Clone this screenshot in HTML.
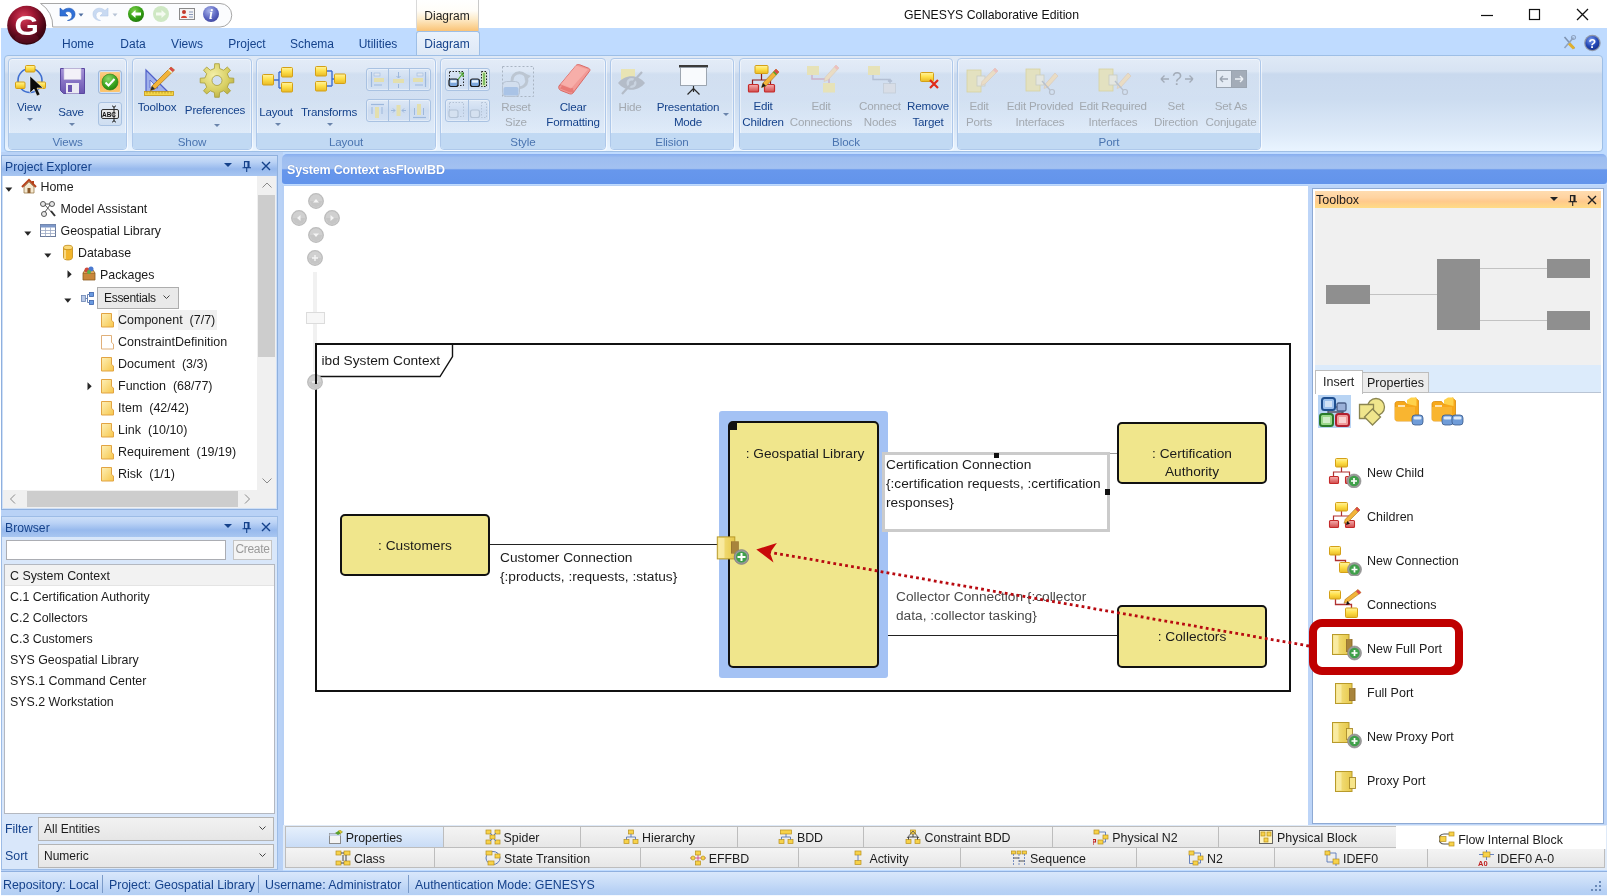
<!DOCTYPE html>
<html><head><meta charset="utf-8"><title>GENESYS Collaborative Edition</title>
<style>
*{box-sizing:border-box;margin:0;padding:0}
html,body{width:1608px;height:896px;overflow:hidden}
body{position:relative;background:#fff;font-family:"Liberation Sans",sans-serif;font-size:12px;color:#1b1b1b}
.abs{position:absolute}
.t{position:absolute;white-space:nowrap;line-height:14px;height:14px}
.c{transform:translateX(-50%);text-align:center}
/* title */
#title{left:0;top:0;width:1608px;height:28px;background:#fff}
#tabrow{left:1px;top:28px;width:1605.500px;height:866.500px;background:#bfdbff}
.rt{color:#15428b;font-size:12px}
#ribbon{left:4px;top:55px;width:1599px;height:97px;border:1px solid #9ebfe6;border-radius:4px;background:linear-gradient(#dfe9f6 0,#d7e3f3 16%,#c9d9ee 19%,#ccdcf0 45%,#dce9f8 80%,#e9f4ff 100%)}
.grp{position:absolute;top:58px;height:92px;border:1px solid #aec8ea;border-radius:4px;background:linear-gradient(rgba(255,255,255,.18),rgba(255,255,255,.05));box-shadow:inset 0 0 0 1px rgba(255,255,255,.45), 1px 1px 0 rgba(255,255,255,.6)}
.grp .gl{position:absolute;left:0;right:0;bottom:0;height:16px;background:#c1d9f3;border-radius:0 0 3px 3px;color:#4a74b0;text-align:center;font-size:11.6px;line-height:17px;letter-spacing:-.1px}
.lb{color:#15428b}
.dis{color:#a3a9b0}
.arr{position:absolute;width:0;height:0;border-left:3px solid transparent;border-right:3px solid transparent;border-top:3px solid #5a77a0}
/* panels */
.phead{position:absolute;height:19px;background:linear-gradient(#cddff8 0,#bad2f5 30%,#97b9ed 65%,#a8c6f1 100%);color:#15428b;font-size:12.2px;line-height:19px;padding-left:3px}
.tree .t{font-size:12px;color:#1b1b1b}
#root{position:absolute;left:0;top:0;width:1608px;height:896px;will-change:transform}
</style></head><body>
<div id="root">
<!--TITLE-->
<div class="abs" id="title"></div>
<div class="abs" id="tabrow"></div>
<!-- contextual tab -->
<div class="abs" style="left:416px;top:0;width:63px;height:31px;border-left:1px solid #d9d9d9;border-right:1px solid #c9c9c9;background:linear-gradient(#ffffff 0,#fffdf8 35%,#fdeccc 60%,#fbd08f 88%,#f9c377 100%)"></div>
<div class="t c" style="left:447px;top:9px;font-size:12px;color:#1e1e1e">Diagram</div>
<div class="t" style="left:904px;top:8px;font-size:12.25px;color:#111">GENESYS Collaborative Edition</div>
<!-- window controls -->
<svg class="abs" style="left:1470px;top:0" width="138" height="28" viewBox="0 0 138 28">
<path d="M11 15.5h12" stroke="#111" stroke-width="1.2" fill="none"/>
<rect x="59.5" y="9.5" width="10" height="10" stroke="#111" stroke-width="1.2" fill="none"/>
<path d="M107 9l11 11M118 9l-11 11" stroke="#111" stroke-width="1.3" fill="none"/>
</svg>
<!-- QAT -->
<svg class="abs" style="left:0;top:0" width="240" height="56" viewBox="0 0 240 56">
<defs>
<radialGradient id="gl" cx="0.42" cy="0.3" r="0.75"><stop offset="0" stop-color="#d8405c"/><stop offset="0.35" stop-color="#a01834"/><stop offset="0.75" stop-color="#4a0616"/><stop offset="1" stop-color="#2a020a"/></radialGradient>
<radialGradient id="gg" cx="0.4" cy="0.3" r="0.8"><stop offset="0" stop-color="#7ed04a"/><stop offset="0.6" stop-color="#2f9a12"/><stop offset="1" stop-color="#1d6e08"/></radialGradient>
<radialGradient id="gi" cx="0.4" cy="0.3" r="0.8"><stop offset="0" stop-color="#a9b4ea"/><stop offset="0.6" stop-color="#5a64c0"/><stop offset="1" stop-color="#3a3f96"/></radialGradient>
</defs>
<path d="M40.500 3.500H220a11.750 11.750 0 0 1 0 23.500H52.700A26 26 0 0 0 40.500 3.500Z" fill="#fbfcfe" stroke="#a7a7a7" stroke-width="1"/>
<circle cx="26.700" cy="25.300" r="19.500" fill="url(#gl)"/>
<ellipse cx="26.700" cy="38.300" rx="12" ry="5" fill="#7a1a30" opacity=".35"/>
<text x="26.700" y="35.500" text-anchor="middle" font-family="Liberation Sans, sans-serif" font-weight="bold" font-size="28" fill="#fff" transform="translate(26.700 0) scale(1.12 1) translate(-26.700 0)">G</text>
<!-- undo -->
<path d="M60 8v8h8l-3-3c3-3 7-1 7 2.500 0 3-2 4.500-4.500 5 4.500 0 7.500-2.500 7.500-6.500 0-5.500-7-8-12-3.500Z" fill="#2f6fd6" stroke="#1f55b5" stroke-width=".6"/>
<path d="M78.500 13.500h5l-2.500 3z" fill="#4f6ea0"/>
<!-- redo faded -->
<path d="M108 8v8h-8l3-3c-3-3-7-1-7 2.500 0 3 2 4.500 4.500 5-4.500 0-7.500-2.500-7.500-6.500 0-5.500 7-8 12-3.500Z" fill="#c9daf2" stroke="#b7cbe8" stroke-width=".6"/>
<path d="M112.500 13.500h5l-2.500 3z" fill="#b8c4d6"/>
<!-- back -->
<circle cx="136" cy="14" r="8" fill="url(#gg)"/>
<path d="M131 14l4.500-4v2.500h5.500v3h-5.500v2.500z" fill="#fff"/>
<circle cx="161" cy="14" r="8" fill="#cfe8c4"/>
<path d="M166 14l-4.500-4v2.500h-5.500v3h5.500v2.500z" fill="#f4faf0"/>
<!-- card -->
<rect x="179.500" y="8.500" width="15" height="11" fill="#f4f4f4" stroke="#8a8a8a"/>
<circle cx="184" cy="12" r="2" fill="#c0392b"/><path d="M181 18c0-3 6-3 6 0z" fill="#d9412f"/>
<path d="M189 12h4M189 14.500h4M189 17h4" stroke="#8899bb" stroke-width="1"/>
<!-- info -->
<circle cx="211" cy="14" r="8" fill="url(#gi)"/>
<text x="211" y="19" text-anchor="middle" font-family="Liberation Serif, serif" font-style="italic" font-weight="bold" font-size="14" fill="#fff">i</text>
</svg>
<!-- tab labels -->
<div class="abs" style="left:416px;top:31px;width:64px;height:25px;border:1px solid #9ebfe6;border-bottom:none;border-radius:3px 3px 0 0;background:linear-gradient(#eaf2fc,#dde8f6)"></div>
<div class="t c rt" style="left:78px;top:37px">Home</div>
<div class="t c rt" style="left:133px;top:37px">Data</div>
<div class="t c rt" style="left:187px;top:37px">Views</div>
<div class="t c rt" style="left:247px;top:37px">Project</div>
<div class="t c rt" style="left:312px;top:37px">Schema</div>
<div class="t c rt" style="left:378px;top:37px">Utilities</div>
<div class="t c rt" style="left:447px;top:37px">Diagram</div>
<!-- right icons -->
<svg class="abs" style="left:1558px;top:32.500px" width="48" height="20" viewBox="0 0 48 20">
<defs><radialGradient id="gh" cx="0.4" cy="0.3" r="0.8"><stop offset="0" stop-color="#7f9ff0"/><stop offset="0.55" stop-color="#2448b8"/><stop offset="1" stop-color="#142a80"/></radialGradient></defs>
<path d="M6.500 4l10 11.500" stroke="#7f93b0" stroke-width="1.600"/><path d="M15.500 4.500l-9 10.500" stroke="#8fa3c0" stroke-width="1.600"/><path d="M11 10.500l5 5" stroke="#e0b030" stroke-width="3"/><circle cx="15.500" cy="4.500" r="2" fill="none" stroke="#8fa3c0" stroke-width="1.200"/>
<circle cx="34.400" cy="10" r="8.300" fill="#8d95a8"/><circle cx="34.400" cy="10" r="7" fill="url(#gh)"/>
<text x="34.400" y="14.500" text-anchor="middle" font-family="Liberation Sans, sans-serif" font-weight="bold" font-size="12.500" fill="#fff">?</text>
</svg>
<div class="abs" id="ribbon"></div>
<!--RIBBON-GROUPS-->
<svg width="0" height="0" style="position:absolute"><defs><linearGradient id="yg" x1="0" y1="0" x2="0" y2="1"><stop offset="0" stop-color="#fff3a0"/><stop offset=".45" stop-color="#ffe14d"/><stop offset="1" stop-color="#e8b923"/></linearGradient><linearGradient id="rg" x1="0" y1="0" x2="0" y2="1"><stop offset="0" stop-color="#f6b0b0"/><stop offset="1" stop-color="#d24a4a"/></linearGradient><linearGradient id="pg" x1="0" y1="0" x2="0" y2="1"><stop offset="0" stop-color="#a592d8"/><stop offset="1" stop-color="#6a55b0"/></linearGradient><linearGradient id="fy" x1="0" y1="0" x2="1" y2="0"><stop offset="0" stop-color="#f7e58a"/><stop offset="1" stop-color="#e6c84a"/></linearGradient><radialGradient id="gc" cx="0.4" cy="0.3" r="0.8"><stop offset="0" stop-color="#8fd86a"/><stop offset="0.6" stop-color="#3aa520"/><stop offset="1" stop-color="#1f7a0c"/></radialGradient><radialGradient id="gear" cx="0.4" cy="0.35" r="0.75"><stop offset="0" stop-color="#f4efa8"/><stop offset="0.6" stop-color="#d8cf62"/><stop offset="1" stop-color="#b3a93e"/></radialGradient></defs></svg>
<div class="grp" style="left:8px;width:119px"><div class="gl">Views</div></div>
<svg class="abs" style="left:13px;top:62px" width="36" height="38" viewBox="0 0 36 38"><circle cx="17" cy="18.500" r="12" fill="none" stroke="#3f6fd0" stroke-width="1.6"/><rect x="12.5" y="3.5" width="9.5" height="6.5" rx="1" fill="url(#yg)" stroke="#d4a017" stroke-width="1" opacity="1"/><rect x="2.5" y="20" width="9.5" height="6.5" rx="1" fill="url(#yg)" stroke="#d4a017" stroke-width="1" opacity="1"/><rect x="23" y="20" width="9.5" height="6.5" rx="1" fill="url(#yg)" stroke="#d4a017" stroke-width="1" opacity="1"/><path d="M17 14v17l4-4 3 7 3-1.500-3-6.500h6z" fill="#0a0a0a" stroke="#fff" stroke-width=".5"/></svg>
<div class="t c lb" style="left:29px;top:100px;font-size:11.6px;letter-spacing:-.2px">View</div>
<div class="arr" style="left:27px;top:118px;border-top-color:#6a84ab"></div>
<svg class="abs" style="left:57.5px;top:66px" width="30" height="30" viewBox="0 0 30 30"><path d="M2.500 2.500h24v25h-21l-3-3z" fill="url(#pg)" stroke="#5a47a0"/><rect x="6" y="2.500" width="17" height="11" fill="#f3f1f8" stroke="#c9c3dd" stroke-width=".6"/><rect x="8" y="17" width="13" height="10.500" fill="#ebe9f3"/><rect x="10" y="19" width="4" height="7" fill="#6a55b0"/></svg>
<div class="t c lb" style="left:71px;top:105px;font-size:11.6px;letter-spacing:-.2px">Save</div>
<div class="arr" style="left:69px;top:123px;border-top-color:#6a84ab"></div>
<div class="abs" style="left:98px;top:70px;width:24px;height:24px;border:1px solid #9bb8e0;border-radius:3px;background:linear-gradient(#fbd08c,#f9b454 50%,#fcc874);box-shadow:inset 0 0 0 1px #d4e2f4"></div>
<svg class="abs" style="left:101px;top:73px" width="18" height="18" viewBox="0 0 18 18"><circle cx="9" cy="9" r="8" fill="url(#gc)" stroke="#2a7a12" stroke-width=".6"/><path d="M4.500 9.500l3 3 6-6.500" fill="none" stroke="#fff" stroke-width="2"/></svg>
<div class="abs" style="left:98px;top:102px;width:24px;height:24px;border:1px solid #a9c2e2;border-radius:3px;background:linear-gradient(#dfe9f6,#cfdef1)"></div>
<svg class="abs" style="left:100px;top:105px" width="20" height="18" viewBox="0 0 20 18"><rect x="1.500" y="4.500" width="17" height="9" rx="1.500" fill="#e8e8e8" stroke="#333" stroke-width="1"/><text x="9" y="12" font-size="6.500" font-weight="bold" font-family="Liberation Sans, sans-serif" text-anchor="middle" fill="#111">ABC</text><path d="M12 1c1.500 0 2 1 2 2v12c0 1-.5 2-2 2M16 1c-1.500 0-2 1-2 2M16 17c-1.500 0-2-1-2-2" fill="none" stroke="#222" stroke-width="1"/></svg>
<div class="grp" style="left:132px;width:120px"><div class="gl">Show</div></div>
<svg class="abs" style="left:140.5px;top:62.5px" width="36" height="34" viewBox="0 0 36 34"><path d="M5 7v22h22z" fill="#8ea0e8" fill-opacity=".75" stroke="#5060c8" stroke-width="1.200"/><path d="M9 17v8h8z" fill="#dfe6f8" stroke="#5060c8" stroke-width=".8"/><rect x="3.500" y="28.500" width="29" height="4" fill="#f3d64a" stroke="#c79a12" stroke-width=".8"/><path d="M6 28.500v2M9 28.500v2M12 28.500v2M15 28.500v2M18 28.500v2M21 28.500v2M24 28.500v2M27 28.500v2M30 28.500v2" stroke="#a27c10" stroke-width=".6"/><path d="M30 4l3.500 3L14 26l-4.500 1.500L11 23z" fill="#f2b43a" stroke="#a8741a" stroke-width=".7"/><path d="M30 4l3.500 3-2 2-3.500-3z" fill="#d94a4a"/><path d="M28 6l3.500 3-1 1-3.500-3z" fill="#e8f0e0"/><path d="M9.500 27.500L11 23l3 3z" fill="#2a2a2a"/></svg>
<div class="t c lb" style="left:157px;top:100px;font-size:11.6px;letter-spacing:-.2px">Toolbox</div>
<svg class="abs" style="left:197.6px;top:61.5px" width="38" height="38" viewBox="0 0 38 38"><path fill-rule="evenodd" d="M31.0 15.9L35.8 16.2L35.8 20.8L31.0 21.1L29.3 25.2L32.5 28.8L29.3 32.0L25.7 28.8L21.6 30.5L21.3 35.3L16.7 35.3L16.4 30.5L12.3 28.8L8.7 32.0L5.5 28.8L8.7 25.2L7.0 21.1L2.2 20.8L2.2 16.2L7.0 15.9L8.7 11.8L5.5 8.2L8.7 5.0L12.3 8.2L16.4 6.5L16.7 1.7L21.3 1.7L21.6 6.5L25.7 8.2L29.3 5.0L32.5 8.2L29.3 11.8Z M24 18.5a5 5 0 1 0 -10 0a5 5 0 1 0 10 0Z" fill="url(#gear)" stroke="#a79c38" stroke-width=".8"/></svg>
<div class="t c lb" style="left:215px;top:103px;font-size:11.6px;letter-spacing:-.2px">Preferences</div>
<div class="arr" style="left:214px;top:124px;border-top-color:#6a84ab"></div>
<div class="grp" style="left:256px;width:180px"><div class="gl">Layout</div></div>
<svg class="abs" style="left:258px;top:62px" width="38" height="34" viewBox="0 0 38 34"><path d="M16 18h5M21 10v16M21 10h3M21 26h3" fill="none" stroke="#3f6fd0" stroke-width="1.400"/><rect x="4.5" y="12.5" width="11" height="10.5" rx="1" fill="url(#yg)" stroke="#d4a017" stroke-width="1" opacity="1"/><rect x="23.5" y="5.5" width="11" height="9.5" rx="1" fill="url(#yg)" stroke="#d4a017" stroke-width="1" opacity="1"/><rect x="23.5" y="20.5" width="11" height="9.5" rx="1" fill="url(#yg)" stroke="#d4a017" stroke-width="1" opacity="1"/></svg>
<div class="t c lb" style="left:276px;top:105px;font-size:11.6px;letter-spacing:-.2px">Layout</div>
<div class="arr" style="left:275px;top:123px;border-top-color:#6a84ab"></div>
<svg class="abs" style="left:311px;top:62px" width="38" height="34" viewBox="0 0 38 34"><path d="M16 9h5M16 24h5M21 9v15M21 17h3" fill="none" stroke="#3f6fd0" stroke-width="1.400"/><rect x="4.5" y="4.5" width="11" height="9.5" rx="1" fill="url(#yg)" stroke="#d4a017" stroke-width="1" opacity="1"/><rect x="4.5" y="19.5" width="11" height="9.5" rx="1" fill="url(#yg)" stroke="#d4a017" stroke-width="1" opacity="1"/><rect x="23.5" y="12" width="11" height="9.5" rx="1" fill="url(#yg)" stroke="#d4a017" stroke-width="1" opacity="1"/></svg>
<div class="t c lb" style="left:329px;top:105px;font-size:11.6px;letter-spacing:-.2px">Transforms</div>
<div class="arr" style="left:327px;top:123px;border-top-color:#6a84ab"></div>
<div class="abs" style="left:366px;top:68px;width:65px;height:23px;border:1px solid #a9c2e2;border-radius:3px;background:linear-gradient(#dde8f6,#cddcf0 50%,#d3e1f3);box-shadow:inset 0 0 0 1px rgba(255,255,255,.35)"></div>
<div class="abs" style="left:387.7px;top:69px;width:1px;height:21px;background:#a9c2e2"></div>
<div class="abs" style="left:409.3px;top:69px;width:1px;height:21px;background:#a9c2e2"></div>
<svg class="abs" style="left:366px;top:68px" width="65" height="23" viewBox="0 0 65 23"><path d="M5.500 4v15" stroke="#9db8dc" stroke-width="1.200"/><rect x="8" y="5" width="6" height="3" fill="#dfe6f0" stroke="#9db8dc" stroke-width=".6"/><rect x="8" y="10" width="10" height="4" fill="#e3dfae"/><path d="M8 17h8" stroke="#9db8dc"/><rect x="27" y="11" width="11" height="4" fill="#e3dfae"/><path d="M32.500 4v6M32.500 16v4M30.500 8l2 2 2-2" stroke="#9db8dc" fill="none"/><path d="M59.500 4v15" stroke="#9db8dc" stroke-width="1.200"/><rect x="51" y="5" width="6" height="3" fill="#dfe6f0" stroke="#9db8dc" stroke-width=".6"/><rect x="47" y="10" width="10" height="4" fill="#e3dfae"/><path d="M49 17h8" stroke="#9db8dc"/></svg>
<div class="abs" style="left:366px;top:99px;width:65px;height:23px;border:1px solid #a9c2e2;border-radius:3px;background:linear-gradient(#dde8f6,#cddcf0 50%,#d3e1f3);box-shadow:inset 0 0 0 1px rgba(255,255,255,.35)"></div>
<div class="abs" style="left:387.7px;top:100px;width:1px;height:21px;background:#a9c2e2"></div>
<div class="abs" style="left:409.3px;top:100px;width:1px;height:21px;background:#a9c2e2"></div>
<svg class="abs" style="left:366px;top:99px" width="65" height="23" viewBox="0 0 65 23"><path d="M5 5.500h13" stroke="#9db8dc" stroke-width="1.200"/><rect x="9" y="8" width="4" height="11" fill="#e3dfae"/><path d="M6 8v7M16 8v7" stroke="#9db8dc"/><rect x="30.500" y="6" width="4" height="11" fill="#e3dfae"/><path d="M25 11.500h4M36 11.500h4M27 9.500l2 2-2 2M38 9.500l-2 2 2 2" stroke="#9db8dc" fill="none"/><path d="M47 18.500h13" stroke="#9db8dc" stroke-width="1.200"/><rect x="51" y="5" width="4" height="11" fill="#e3dfae"/><path d="M48.500 9v7M57.500 9v7" stroke="#9db8dc"/></svg>
<div class="grp" style="left:440px;width:166px"><div class="gl">Style</div></div>
<div class="abs" style="left:445px;top:68px;width:45px;height:23px;border:1px solid #a9c2e2;border-radius:3px;background:linear-gradient(#dde8f6,#cddcf0 50%,#d3e1f3);box-shadow:inset 0 0 0 1px rgba(255,255,255,.35)"></div>
<div class="abs" style="left:467.5px;top:69px;width:1px;height:21px;background:#a9c2e2"></div>
<svg class="abs" style="left:445px;top:68px" width="45" height="23" viewBox="0 0 45 23"><rect x="4.500" y="3.500" width="14" height="14" fill="none" stroke="#222" stroke-dasharray="1.500 1.500"/><path d="M12 13l6-8M14 5h4v4" stroke="#4aa32a" fill="none" stroke-width="1.200"/><rect x="4" y="11" width="9" height="7.500" rx="2" fill="#7da7dc" stroke="#1b1b1b" stroke-width="1.200"/><rect x="5.500" y="12.200" width="6" height="2.500" fill="#e9f2fb"/><rect x="36.500" y="3.500" width="5" height="15" fill="#cfe6b8" stroke="#222" stroke-dasharray="1.500 1.500"/><path d="M39 5v12" stroke="#4aa32a" stroke-width="1.200"/><rect x="25.500" y="11" width="9" height="7.500" rx="2" fill="#7da7dc" stroke="#1b1b1b" stroke-width="1.200"/><rect x="27" y="12.200" width="6" height="2.500" fill="#e9f2fb"/></svg>
<div class="abs" style="left:445px;top:99px;width:45px;height:23px;border:1px solid #a9c2e2;border-radius:3px;background:linear-gradient(#dde8f6,#cddcf0 50%,#d3e1f3);box-shadow:inset 0 0 0 1px rgba(255,255,255,.35)"></div>
<div class="abs" style="left:467.5px;top:100px;width:1px;height:21px;background:#a9c2e2"></div>
<svg class="abs" style="left:445px;top:99px" width="45" height="23" viewBox="0 0 45 23"><rect x="4.500" y="3.500" width="14" height="14" fill="none" stroke="#b4c3d6" stroke-dasharray="1.500 1.500"/><rect x="4" y="11" width="9" height="7.500" rx="2" fill="#d5e1f0" stroke="#b4c3d6" stroke-width="1.200"/><rect x="36.500" y="3.500" width="5" height="15" fill="none" stroke="#b4c3d6" stroke-dasharray="1.500 1.500"/><rect x="25.500" y="11" width="9" height="7.500" rx="2" fill="#d5e1f0" stroke="#b4c3d6" stroke-width="1.200"/></svg>
<svg class="abs" style="left:500px;top:64px" width="38" height="36" viewBox="0 0 38 36"><rect x="2.500" y="2.500" width="31" height="30" fill="none" stroke="#a9b4c2" stroke-dasharray="2 2"/><path d="M12 17a7.500 7.500 0 1 1 6 6.500" fill="none" stroke="#bcc6d2" stroke-width="3"/><path d="M24 9l7 3-6 5z" fill="#bcc6d2"/><rect x="2.500" y="17.500" width="17" height="15" rx="4" fill="#d2deee" stroke="#b7c3d3"/><rect x="3.500" y="23" width="15" height="8.500" rx="2" fill="#a9c3e6"/></svg>
<div class="t c dis" style="left:516px;top:100px;font-size:11.6px;letter-spacing:-.2px">Reset</div>
<div class="t c dis" style="left:516px;top:114.5px;font-size:11.6px;letter-spacing:-.2px">Size</div>
<svg class="abs" style="left:556px;top:62px" width="38" height="36" viewBox="0 0 38 36"><path d="M3 24L20 3.500c1-1 2-1.200 3.500-.8l9 3.500c1.500.6 1.800 2 1 3L17 31c-1 1-2 1.200-3.500.8l-9-3.500C3 27.600 2.300 25.500 3 24z" fill="#f29a96" stroke="#d96a66" stroke-width="1"/><path d="M3 24c.5-1 2-1.500 3.200-1l9 3.500c1.500.6 2.200 2.500 1.500 4" fill="none" stroke="#d96a66"/><path d="M4 26.500l10 4c1 .3 2 0 2.700-.7l.6-3.300-10.500-4z" fill="#e87a76"/><path d="M20 3.500L4.500 22.500l10.500 4L32 7.500z" fill="#f7b3ae" opacity=".8"/></svg>
<div class="t c lb" style="left:573px;top:100px;font-size:11.6px;letter-spacing:-.2px">Clear</div>
<div class="t c lb" style="left:573px;top:114.5px;font-size:11.6px;letter-spacing:-.2px">Formatting</div>
<div class="grp" style="left:610px;width:124px"><div class="gl">Elision</div></div>
<svg class="abs" style="left:614px;top:66px" width="38" height="32" viewBox="0 0 38 32"><rect x="7" y="3" width="14" height="12" fill="#e9e4b4"/><path d="M4 17c7-9 20-9 27 0-7 9-20 9-27 0z" fill="#b4bcc8"/><circle cx="17.500" cy="17" r="5" fill="#c9d3e0"/><circle cx="17.500" cy="17" r="2.500" fill="#b4bcc8"/><path d="M8 28L28 6" stroke="#b4bcc8" stroke-width="2.200"/></svg>
<div class="t c dis" style="left:630px;top:100px;font-size:11.6px;letter-spacing:-.2px">Hide</div>
<svg class="abs" style="left:674px;top:62px" width="38" height="36" viewBox="0 0 38 36"><rect x="5" y="3" width="29" height="2.500" fill="#3a3a3a"/><rect x="6.500" y="5.500" width="26" height="18" fill="#f8fafd" stroke="#8a939e" stroke-width=".8"/><path d="M19.500 24v6M19.500 26.500l-6 6M19.500 26.500l6 6" stroke="#2a2a2a" stroke-width="1.200" fill="none"/></svg>
<div class="t c lb" style="left:688px;top:100px;font-size:11.6px;letter-spacing:-.2px">Presentation</div>
<div class="t c lb" style="left:688px;top:114.5px;font-size:11.6px;letter-spacing:-.2px">Mode</div>
<div class="arr" style="left:723px;top:113px;border-top-color:#6a84ab"></div>
<div class="grp" style="left:739px;width:214px"><div class="gl">Block</div></div>
<svg class="abs" style="left:746px;top:62px" width="38" height="34" viewBox="0 0 38 34"><path d="M15.500 12v6M6.500 22v-4h18v4" fill="none" stroke="#8a1a1a" stroke-width="1.200"/><rect x="9" y="3.5" width="13" height="8" rx="1" fill="url(#yg)" stroke="#d4a017" stroke-width="1" opacity="1"/><rect x="2.5" y="22.5" width="10" height="7.5" rx="1" fill="url(#rg)" stroke="#c42a2a" stroke-width="1.200"/><rect x="18.5" y="22.5" width="10" height="7.5" rx="1" fill="url(#rg)" stroke="#c42a2a" stroke-width="1.200"/><path d="M30 7l3 3L20 24l-4.500 1.500L17 21z" fill="#f2b43a" stroke="#a8741a" stroke-width=".6"/><path d="M30 7l3 3-2.200 2.200-3-3z" fill="#d94a4a"/><path d="M28 9.300l3 3-1 1-3-3z" fill="#4aa32a"/><path d="M15.500 25.500L17 21l3 3z" fill="#1a1a1a"/></svg>
<div class="t c lb" style="left:763px;top:99px;font-size:11.6px;letter-spacing:-.2px">Edit</div>
<div class="t c lb" style="left:763px;top:114.5px;font-size:11.6px;letter-spacing:-.2px">Children</div>
<svg class="abs" style="left:803px;top:62px" width="38" height="36" viewBox="0 0 38 36"><rect x="4" y="4" width="12" height="9" fill="#e6e2b8"/><rect x="20" y="21" width="12" height="9.500" fill="#e6e2b8"/><path d="M9 13v4h17v4" fill="none" stroke="#cdb3c8" stroke-width="1.500"/><path d="M33 3l3 3L25 18l-4 1.500L22 15.500z" fill="#e9dcc4" stroke="#d8c8b8" stroke-width=".6"/><path d="M33 3l3 3-2 2-3-3z" fill="#ecc0c0"/></svg>
<div class="t c dis" style="left:821px;top:99px;font-size:11.6px;letter-spacing:-.2px">Edit</div>
<div class="t c dis" style="left:821px;top:114.5px;font-size:11.6px;letter-spacing:-.2px">Connections</div>
<svg class="abs" style="left:862px;top:62px" width="38" height="36" viewBox="0 0 38 36"><rect x="6" y="4" width="12" height="9" fill="#e6e2b8"/><rect x="21.500" y="21.500" width="12" height="9.500" fill="#d8dde6" stroke="#c4ccd8" stroke-width=".8"/><path d="M11 13v4.500h17v4M26 19.500l2-2 2 2" fill="none" stroke="#b4c0d4" stroke-width="1.400"/></svg>
<div class="t c dis" style="left:880px;top:99px;font-size:11.6px;letter-spacing:-.2px">Connect</div>
<div class="t c dis" style="left:880px;top:114.5px;font-size:11.6px;letter-spacing:-.2px">Nodes</div>
<svg class="abs" style="left:918px;top:68px" width="24" height="24" viewBox="0 0 24 24"><rect x="2.5" y="4.5" width="13" height="9" rx="1" fill="url(#yg)" stroke="#d4a017" stroke-width="1" opacity="1"/><path d="M12 12l8 8M20 12l-8 8" stroke="#e02a1a" stroke-width="2.200"/></svg>
<div class="t c lb" style="left:928px;top:99px;font-size:11.6px;letter-spacing:-.2px">Remove</div>
<div class="t c lb" style="left:928px;top:114.5px;font-size:11.6px;letter-spacing:-.2px">Target</div>
<div class="grp" style="left:957px;width:304px"><div class="gl">Port</div></div>
<svg class="abs" style="left:963.5px;top:63.5px" width="38" height="36" viewBox="0 0 38 36"><rect x="3" y="6" width="14" height="22" fill="#e3e1c0" stroke="#d8d2a0" stroke-width=".8"/><rect x="13" y="12" width="8" height="10" fill="#e4e6e0" stroke="#c8ccc4" stroke-width=".8"/><path d="M31 4l3 3L21 20l-4 1.500L18 17.500z" fill="#e9dcc4" stroke="#d8c8b8" stroke-width=".6"/><path d="M31 4l3 3-2 2-3-3z" fill="#ecc0c0"/></svg>
<div class="t c dis" style="left:979px;top:99px;font-size:11.6px;letter-spacing:-.2px">Edit</div>
<div class="t c dis" style="left:979px;top:114.5px;font-size:11.6px;letter-spacing:-.2px">Ports</div>
<svg class="abs" style="left:1022px;top:63.5px" width="38" height="36" viewBox="0 0 38 36"><rect x="4" y="5" width="14" height="22" fill="#e3e1c0" stroke="#d8d2a0" stroke-width=".8"/><rect x="14" y="11" width="8" height="10" fill="#e4e6e0" stroke="#c8ccc4" stroke-width=".8"/><path d="M33 9l3 3L26 23l-4 1.500L23 20.500z" fill="#e9dcc4" stroke="#d8c8b8" stroke-width=".6"/><path d="M20 17l8 9" stroke="#b8c0cc" stroke-width="1.300"/><circle cx="30" cy="28" r="2.500" fill="none" stroke="#b8c0cc" stroke-width="1.200"/></svg>
<div class="t c dis" style="left:1040px;top:99px;font-size:11.6px;letter-spacing:-.2px">Edit Provided</div>
<div class="t c dis" style="left:1040px;top:114.5px;font-size:11.6px;letter-spacing:-.2px">Interfaces</div>
<svg class="abs" style="left:1095px;top:63.5px" width="38" height="36" viewBox="0 0 38 36"><rect x="4" y="5" width="14" height="22" fill="#e3e1c0" stroke="#d8d2a0" stroke-width=".8"/><rect x="14" y="11" width="8" height="10" fill="#e4e6e0" stroke="#c8ccc4" stroke-width=".8"/><path d="M33 9l3 3L26 23l-4 1.500L23 20.500z" fill="#e9dcc4" stroke="#d8c8b8" stroke-width=".6"/><path d="M20 17l8 9" stroke="#b8c0cc" stroke-width="1.300"/><circle cx="30" cy="28" r="2.500" fill="none" stroke="#b8c0cc" stroke-width="1.200"/></svg>
<div class="t c dis" style="left:1113px;top:99px;font-size:11.6px;letter-spacing:-.2px">Edit Required</div>
<div class="t c dis" style="left:1113px;top:114.5px;font-size:11.6px;letter-spacing:-.2px">Interfaces</div>
<svg class="abs" style="left:1158px;top:68px" width="38" height="22" viewBox="0 0 38 22"><path d="M3 11h8M3 11l3.500-3.500M3 11l3.500 3.500M35 11h-8M35 11l-3.500-3.500M35 11l-3.500 3.500" stroke="#a3acb8" stroke-width="1.400" fill="none"/><text x="19" y="17" font-size="18" font-family="Liberation Sans, sans-serif" text-anchor="middle" fill="#a3acb8">?</text></svg>
<div class="t c dis" style="left:1176px;top:99px;font-size:11.6px;letter-spacing:-.2px">Set</div>
<div class="t c dis" style="left:1176px;top:114.5px;font-size:11.6px;letter-spacing:-.2px">Direction</div>
<svg class="abs" style="left:1214px;top:68px" width="34" height="22" viewBox="0 0 34 22"><rect x="2.500" y="2.500" width="15" height="17" fill="#e4ebf4" stroke="#9aa4b0"/><rect x="17.500" y="2.500" width="15" height="17" fill="#a3acb8" stroke="#9aa4b0"/><path d="M14 11H6M6 11l3-3M6 11l3 3" stroke="#9aa4b0" stroke-width="1.400" fill="none"/><path d="M21 11h8M29 11l-3-3M29 11l-3 3" stroke="#eef2f7" stroke-width="1.400" fill="none"/></svg>
<div class="t c dis" style="left:1231px;top:99px;font-size:11.6px;letter-spacing:-.2px">Set As</div>
<div class="t c dis" style="left:1231px;top:114.5px;font-size:11.6px;letter-spacing:-.2px">Conjugate</div>
<!--LEFT-->
<div class="abs" style="left:1px;top:152px;width:282px;height:720px;background:#b9d2f6"></div>
<div class="abs" style="left:1px;top:155px;width:277px;height:355px;border:1px solid #8fb0de;background:#cfe0f7"></div>
<div class="phead" style="left:2px;top:156px;width:275px;height:20px;line-height:22px">Project Explorer</div>
<svg class="abs" style="left:224px;top:161px" width="48" height="12" viewBox="0 0 48 12"><path d="M0 2h8l-4 4z" fill="#15428b"/><path d="M20.500 .6h4.500v6h-4.500zM24 .6v6M18.500 6.800h8.500M22.700 7v4" stroke="#15428b" stroke-width="1.100" fill="none"/><path d="M38 1l8 8M46 1l-8 8" stroke="#15428b" stroke-width="1.400"/></svg>
<div class="abs" style="left:3px;top:176px;width:273px;height:332px;background:#fff"></div>
<div class="abs" style="left:257px;top:176px;width:19px;height:314px;background:#f0f0f0"></div>
<div class="abs" style="left:258px;top:195px;width:17px;height:162px;background:#cdcdcd"></div>
<svg class="abs" style="left:261px;top:181px" width="12" height="8" viewBox="0 0 12 8"><path d="M1.500 6.500l4.500-4.500 4.500 4.500" stroke="#8a8a8a" fill="none" stroke-width="1"/></svg>
<svg class="abs" style="left:261px;top:477px" width="12" height="8" viewBox="0 0 12 8"><path d="M1.500 1.500l4.500 4.500 4.500-4.500" stroke="#8a8a8a" fill="none" stroke-width="1"/></svg>
<div class="abs" style="left:3px;top:490px;width:254px;height:18px;background:#f0f0f0"></div>
<div class="abs" style="left:257px;top:490px;width:19px;height:18px;background:#f0f0f0"></div>
<div class="abs" style="left:27px;top:491px;width:211px;height:16px;background:#cdcdcd"></div>
<svg class="abs" style="left:9px;top:493px" width="8" height="12" viewBox="0 0 8 12"><path d="M6 1.500l-4.500 4.500 4.500 4.500" stroke="#8a8a8a" fill="none" stroke-width="1"/></svg>
<svg class="abs" style="left:243px;top:493px" width="8" height="12" viewBox="0 0 8 12"><path d="M2 1.500l4.500 4.500-4.500 4.500" stroke="#8a8a8a" fill="none" stroke-width="1"/></svg>
<svg class="abs" style="left:4.5px;top:186.5px" width="8" height="6" viewBox="0 0 8 6"><path d="M.3 .5h7l-3.500 4.200z" fill="#262626"/></svg>
<svg class="abs" style="left:20px;top:178px" width="18" height="16" viewBox="0 0 18 16"><path d="M2 9l7-7 7 7" fill="none" stroke="#b5421a" stroke-width="2"/><path d="M4 9v6h10V9l-5-5z" fill="#f4e8d0" stroke="#9a7a4a" stroke-width=".8"/><rect x="7.500" y="10" width="3" height="5" fill="#8a5a2a"/><rect x="12" y="3" width="2" height="3.500" fill="#b5421a"/></svg>
<div class="t" style="left:40.5px;top:179.8px;font-size:12.4px;color:#1b1b1b;">Home</div>
<svg class="abs" style="left:39px;top:200px" width="18" height="18" viewBox="0 0 18 18"><circle cx="4" cy="4" r="2.500" fill="#e8e8e8" stroke="#555"/><circle cx="13" cy="4" r="2.500" fill="#e8e8e8" stroke="#555"/><circle cx="5" cy="14" r="2.500" fill="#e8e8e8" stroke="#555"/><path d="M6 5l9 10M11 5l-5 7M6.500 4h4" stroke="#555" stroke-width="1" fill="none"/><path d="M12 11l4 5" stroke="#333" stroke-width="2"/></svg>
<div class="t" style="left:60.5px;top:201.6px;font-size:12.4px;color:#1b1b1b;">Model Assistant</div>
<svg class="abs" style="left:23.5px;top:230.5px" width="8" height="6" viewBox="0 0 8 6"><path d="M.3 .5h7l-3.500 4.200z" fill="#262626"/></svg>
<svg class="abs" style="left:39px;top:222px" width="18" height="16" viewBox="0 0 18 16"><rect x="1.500" y="2.500" width="15" height="12" fill="#fff" stroke="#6a7a9a"/><rect x="1.500" y="2.500" width="15" height="3" fill="#7d97c8"/><path d="M1.500 8.500h15M1.500 11.500h15M6.500 5.500v9M11.500 5.500v9" stroke="#9aa8c4" stroke-width=".8"/></svg>
<div class="t" style="left:60.5px;top:223.6px;font-size:12.4px;color:#1b1b1b;">Geospatial Library</div>
<svg class="abs" style="left:43.5px;top:252.5px" width="8" height="6" viewBox="0 0 8 6"><path d="M.3 .5h7l-3.500 4.200z" fill="#262626"/></svg>
<svg class="abs" style="left:62px;top:244px" width="12" height="17" viewBox="0 0 12 17"><path d="M1.500 3.500v10c0 1.500 2 2.500 4.500 2.500s4.500-1 4.500-2.500v-10" fill="#f2b52c" stroke="#c08a18" stroke-width=".8"/><ellipse cx="6" cy="3.500" rx="4.500" ry="2.200" fill="#fbd978" stroke="#c08a18" stroke-width=".8"/><path d="M3 6v9" stroke="#fbe6a0" stroke-width="1.500"/></svg>
<div class="t" style="left:78px;top:245.6px;font-size:12.4px;color:#1b1b1b;">Database</div>
<svg class="abs" style="left:67px;top:270px" width="7" height="10" viewBox="0 0 7 10"><path d="M.5 .3v8l4.200-4z" fill="#262626"/></svg>
<svg class="abs" style="left:80px;top:265px" width="18" height="17" viewBox="0 0 18 17"><path d="M3 8h12v7H3z" fill="#c9873a" stroke="#8a5a1e" stroke-width=".8"/><path d="M3 8l2-3h8l2 3" fill="#e0a85a" stroke="#8a5a1e" stroke-width=".8"/><circle cx="7" cy="5" r="2.500" fill="#d04a3a"/><circle cx="11" cy="4" r="2.500" fill="#4a7ad0"/><circle cx="9" cy="7" r="2" fill="#5ab04a"/></svg>
<div class="t" style="left:100px;top:267.6px;font-size:12.4px;color:#1b1b1b;">Packages</div>
<svg class="abs" style="left:63.5px;top:297.5px" width="8" height="6" viewBox="0 0 8 6"><path d="M.3 .5h7l-3.500 4.200z" fill="#262626"/></svg>
<svg class="abs" style="left:80px;top:291px" width="16" height="15" viewBox="0 0 16 15"><rect x="1.500" y="4.500" width="4" height="6" fill="#b9c9e6" stroke="#6a84b4" stroke-width=".8"/><rect x="9.500" y="1.500" width="4" height="4" fill="#6a9ae0" stroke="#3a62ac" stroke-width=".8"/><rect x="9.500" y="9.500" width="4" height="4" fill="#6a9ae0" stroke="#3a62ac" stroke-width=".8"/><path d="M5.500 7.500h2M7.500 3.500v8M7.500 3.500h2M7.500 11.500h2" stroke="#6a84b4" fill="none"/></svg>
<div class="abs" style="left:97px;top:287px;width:82px;height:21.500px;border:1px solid #adadad;background:#e9e9e9"></div>
<div class="t" style="left:104px;top:291px;font-size:12px;color:#1b1b1b;letter-spacing:-.3px">Essentials</div>
<svg class="abs" style="left:162px;top:294px" width="10" height="7" viewBox="0 0 10 7"><path d="M1.500 1.500l3 3 3-3" stroke="#444" fill="none" stroke-width="1"/></svg>
<div class="abs" style="left:117.500px;top:310px;width:99.500px;height:20px;background:#f0f0f0"></div>
<svg class="abs" style="left:100px;top:312px" width="15" height="16" viewBox="0 0 15 16"><defs><linearGradient id="fo" x1="0" y1="0" x2="1" y2="1"><stop offset="0" stop-color="#fdf0b8"/><stop offset="1" stop-color="#f7c64a"/></linearGradient></defs><path d="M1.500 1.500h10v7l2 1.500v5h-12z" fill="url(#fo)" stroke="#e2a442"/></svg>
<div class="t" style="left:118px;top:313px;font-size:12.5px;color:#1b1b1b;white-space:pre">Component  (7/7)</div>
<svg class="abs" style="left:100px;top:334px" width="15" height="16" viewBox="0 0 15 16"><path d="M1.500 1.500h10v7l2 1.500v5h-12z" fill="#fff" stroke="#e0b07a"/></svg>
<div class="t" style="left:118px;top:335px;font-size:12.5px;color:#1b1b1b;white-space:pre">ConstraintDefinition</div>
<svg class="abs" style="left:100px;top:356px" width="15" height="16" viewBox="0 0 15 16"><defs><linearGradient id="fo" x1="0" y1="0" x2="1" y2="1"><stop offset="0" stop-color="#fdf0b8"/><stop offset="1" stop-color="#f7c64a"/></linearGradient></defs><path d="M1.500 1.500h10v7l2 1.500v5h-12z" fill="url(#fo)" stroke="#e2a442"/></svg>
<div class="t" style="left:118px;top:357px;font-size:12.5px;color:#1b1b1b;white-space:pre">Document  (3/3)</div>
<svg class="abs" style="left:100px;top:378px" width="15" height="16" viewBox="0 0 15 16"><defs><linearGradient id="fo" x1="0" y1="0" x2="1" y2="1"><stop offset="0" stop-color="#fdf0b8"/><stop offset="1" stop-color="#f7c64a"/></linearGradient></defs><path d="M1.500 1.500h10v7l2 1.500v5h-12z" fill="url(#fo)" stroke="#e2a442"/></svg>
<div class="t" style="left:118px;top:379px;font-size:12.5px;color:#1b1b1b;white-space:pre">Function  (68/77)</div>
<svg class="abs" style="left:100px;top:400px" width="15" height="16" viewBox="0 0 15 16"><defs><linearGradient id="fo" x1="0" y1="0" x2="1" y2="1"><stop offset="0" stop-color="#fdf0b8"/><stop offset="1" stop-color="#f7c64a"/></linearGradient></defs><path d="M1.500 1.500h10v7l2 1.500v5h-12z" fill="url(#fo)" stroke="#e2a442"/></svg>
<div class="t" style="left:118px;top:401px;font-size:12.5px;color:#1b1b1b;white-space:pre">Item  (42/42)</div>
<svg class="abs" style="left:100px;top:422px" width="15" height="16" viewBox="0 0 15 16"><defs><linearGradient id="fo" x1="0" y1="0" x2="1" y2="1"><stop offset="0" stop-color="#fdf0b8"/><stop offset="1" stop-color="#f7c64a"/></linearGradient></defs><path d="M1.500 1.500h10v7l2 1.500v5h-12z" fill="url(#fo)" stroke="#e2a442"/></svg>
<div class="t" style="left:118px;top:423px;font-size:12.5px;color:#1b1b1b;white-space:pre">Link  (10/10)</div>
<svg class="abs" style="left:100px;top:444px" width="15" height="16" viewBox="0 0 15 16"><defs><linearGradient id="fo" x1="0" y1="0" x2="1" y2="1"><stop offset="0" stop-color="#fdf0b8"/><stop offset="1" stop-color="#f7c64a"/></linearGradient></defs><path d="M1.500 1.500h10v7l2 1.500v5h-12z" fill="url(#fo)" stroke="#e2a442"/></svg>
<div class="t" style="left:118px;top:445px;font-size:12.5px;color:#1b1b1b;white-space:pre">Requirement  (19/19)</div>
<svg class="abs" style="left:100px;top:466px" width="15" height="16" viewBox="0 0 15 16"><defs><linearGradient id="fo" x1="0" y1="0" x2="1" y2="1"><stop offset="0" stop-color="#fdf0b8"/><stop offset="1" stop-color="#f7c64a"/></linearGradient></defs><path d="M1.500 1.500h10v7l2 1.500v5h-12z" fill="url(#fo)" stroke="#e2a442"/></svg>
<div class="t" style="left:118px;top:467px;font-size:12.5px;color:#1b1b1b;white-space:pre">Risk  (1/1)</div>
<svg class="abs" style="left:87px;top:382px" width="7" height="10" viewBox="0 0 7 10"><path d="M.5 .3v8l4.200-4z" fill="#262626"/></svg>
<div class="abs" style="left:1px;top:516px;width:277px;height:354px;border:1px solid #9dbce6;background:#d9e7fa"></div>
<div class="phead" style="left:2px;top:517px;width:275px;height:20px;line-height:22px">Browser</div>
<svg class="abs" style="left:224px;top:522px" width="48" height="12" viewBox="0 0 48 12"><path d="M0 2h8l-4 4z" fill="#15428b"/><path d="M20.500 .6h4.500v6h-4.500zM24 .6v6M18.500 6.800h8.500M22.700 7v4" stroke="#15428b" stroke-width="1.100" fill="none"/><path d="M38 1l8 8M46 1l-8 8" stroke="#15428b" stroke-width="1.400"/></svg>
<div class="abs" style="left:6px;top:540px;width:220px;height:19.500px;border:1px solid #abadb3;background:#fff"></div>
<div class="abs" style="left:233px;top:540px;width:39px;height:19.500px;border:1px solid #c4c4c4;background:#f4f4f4;color:#9a9a9a;font-size:12px;line-height:17.500px;letter-spacing:-.3px;text-align:center">Create</div>
<div class="abs" style="left:4px;top:564px;width:271px;height:250px;border:1px solid #b4b8c0;background:#fff"></div>
<div class="abs" style="left:5px;top:565px;width:269px;height:21px;background:#f2f2f2;border-bottom:1px solid #e4e4e4"></div>
<div class="t" style="left:10px;top:569px;font-size:12.4px;color:#1b1b1b;">C System Context</div>
<div class="t" style="left:10px;top:590px;font-size:12.4px;color:#1b1b1b;">C.1 Certification Authority</div>
<div class="t" style="left:10px;top:611px;font-size:12.4px;color:#1b1b1b;">C.2 Collectors</div>
<div class="t" style="left:10px;top:632px;font-size:12.4px;color:#1b1b1b;">C.3 Customers</div>
<div class="t" style="left:10px;top:653px;font-size:12.4px;color:#1b1b1b;">SYS Geospatial Library</div>
<div class="t" style="left:10px;top:674px;font-size:12.4px;color:#1b1b1b;">SYS.1 Command Center</div>
<div class="t" style="left:10px;top:695px;font-size:12.4px;color:#1b1b1b;">SYS.2 Workstation</div>
<div class="t" style="left:5px;top:822px;font-size:12.4px;color:#15428b;">Filter</div>
<div class="t" style="left:5px;top:849px;font-size:12.4px;color:#15428b;">Sort</div>
<div class="abs" style="left:38px;top:817px;width:236px;height:24px;border:1px solid #b4b4b4;background:linear-gradient(#f2f2f2,#e6e6e6);font-size:12px;line-height:22px;padding-left:5px">All Entities</div>
<svg class="abs" style="left:258px;top:825px" width="10" height="7" viewBox="0 0 10 7"><path d="M1.500 1.500l3 3 3-3" stroke="#444" fill="none" stroke-width="1"/></svg>
<div class="abs" style="left:38px;top:844px;width:236px;height:24px;border:1px solid #b4b4b4;background:linear-gradient(#f2f2f2,#e6e6e6);font-size:12px;line-height:22px;padding-left:5px">Numeric</div>
<svg class="abs" style="left:258px;top:852px" width="10" height="7" viewBox="0 0 10 7"><path d="M1.500 1.500l3 3 3-3" stroke="#444" fill="none" stroke-width="1"/></svg>
<div class="abs" style="left:1px;top:871px;width:1605.500px;height:25px;background:linear-gradient(#d9e7fb 0,#c9ddf8 40%,#b9d2f5 75%,#b4cff4 94%,#f4f8fe 95%);border-top:1px solid #8fb0e0"></div>
<div class="t" style="left:3px;top:878px;font-size:12.4px;color:#15428b;">Repository: Local</div>
<div class="t" style="left:109px;top:878px;font-size:12.4px;color:#15428b;">Project: Geospatial Library</div>
<div class="t" style="left:265px;top:878px;font-size:12.4px;color:#15428b;">Username: Administrator</div>
<div class="t" style="left:415px;top:878px;font-size:12.4px;color:#15428b;">Authentication Mode: GENESYS</div>
<div class="abs" style="left:102px;top:875px;width:1px;height:18px;background:#7a9ac8"></div>
<div class="abs" style="left:258px;top:875px;width:1px;height:18px;background:#7a9ac8"></div>
<div class="abs" style="left:408px;top:875px;width:1px;height:18px;background:#7a9ac8"></div>
<svg class="abs" style="left:1590px;top:880px" width="14" height="14" viewBox="0 0 14 14"><g fill="#6a8ab8"><rect x="9" y="1" width="2" height="2"/><rect x="5" y="5" width="2" height="2"/><rect x="9" y="5" width="2" height="2"/><rect x="1" y="9" width="2" height="2"/><rect x="5" y="9" width="2" height="2"/><rect x="9" y="9" width="2" height="2"/></g></svg>
<!--MAIN-->
<div class="abs" style="left:282px;top:154px;width:1324.500px;height:30px;border-radius:5px 5px 3px 3px;background:linear-gradient(#86adef 0,#9dbdf0 12%,#a3c1f1 48%,#6797ec 53%,#6394eb 100%)"></div>
<div class="t" style="left:287px;top:163px;font-size:12.500px;font-weight:bold;color:#fff;letter-spacing:-.17px;text-shadow:0 0 1px rgba(40,80,160,.5)">System Context asFlowIBD</div>
<div class="abs" style="left:282px;top:185px;width:1324.500px;height:641px;background:#b7d0f5"></div>
<div class="abs" style="left:284px;top:186px;width:1321.500px;height:639px;background:#fff"></div>
<svg class="abs" style="left:306.5px;top:192.1px;" width="18" height="18" viewBox="0 0 18 18"><circle cx="9" cy="9" r="7.300" fill="#d0d0d0" stroke="#bcbcbc" stroke-width="1.300"/><path d="M3 9a6 6 0 0 0 12 0z" fill="#c6c6c6"/><path d="M6 10.500l3-3.500 3 3.500z" fill="#f4f4f4"/></svg>
<svg class="abs" style="left:289.7px;top:209.2px;" width="18" height="18" viewBox="0 0 18 18"><circle cx="9" cy="9" r="7.300" fill="#d0d0d0" stroke="#bcbcbc" stroke-width="1.300"/><path d="M3 9a6 6 0 0 0 12 0z" fill="#c6c6c6"/><path d="M10.500 6l-3.500 3 3.500 3z" fill="#f4f4f4"/></svg>
<svg class="abs" style="left:323.3px;top:209.2px;" width="18" height="18" viewBox="0 0 18 18"><circle cx="9" cy="9" r="7.300" fill="#d0d0d0" stroke="#bcbcbc" stroke-width="1.300"/><path d="M3 9a6 6 0 0 0 12 0z" fill="#c6c6c6"/><path d="M7.500 6l3.500 3-3.500 3z" fill="#f4f4f4"/></svg>
<svg class="abs" style="left:306.5px;top:225.9px;" width="18" height="18" viewBox="0 0 18 18"><circle cx="9" cy="9" r="7.300" fill="#d0d0d0" stroke="#bcbcbc" stroke-width="1.300"/><path d="M3 9a6 6 0 0 0 12 0z" fill="#c6c6c6"/><path d="M6 7.500l3 3.500 3-3.500z" fill="#f4f4f4"/></svg>
<svg class="abs" style="left:306.4px;top:249px;" width="18" height="18" viewBox="0 0 18 18"><circle cx="9" cy="9" r="7.300" fill="#d0d0d0" stroke="#bcbcbc" stroke-width="1.300"/><path d="M3 9a6 6 0 0 0 12 0z" fill="#c6c6c6"/><path d="M6 9h6M9 6v6" stroke="#f4f4f4" stroke-width="1.400"/></svg>
<div class="abs" style="left:313px;top:272px;width:4px;height:100px;background:#f1f1f1"></div>
<div class="abs" style="left:306px;top:312px;width:19px;height:12px;border:1px solid #dcdcdc;background:#f7f7f7"></div>
<div class="abs" style="left:315.300px;top:343px;width:976px;height:349px;border:2px solid #111"></div>
<svg class="abs" style="left:316.3px;top:344px;" width="140" height="36" viewBox="0 0 140 36"><path d="M0 32.500h124l12.500-20V0" fill="none" stroke="#111" stroke-width="1.400"/></svg>
<div class="t" style="left:321.5px;top:353.3px;font-size:13.7px;color:#1b1b1b;line-height:16px;height:16px;">ibd System Context</div>
<svg class="abs" style="left:306.4px;top:372.7px;" width="18" height="18" viewBox="0 0 18 18"><circle cx="9" cy="9" r="7.300" fill="#d0d0d0" stroke="#bcbcbc" stroke-width="1.300"/><path d="M3 9a6 6 0 0 0 12 0z" fill="#c6c6c6"/><path d="M6 9h6" stroke="#f4f4f4" stroke-width="1.400"/></svg>
<div class="abs" style="left:315px;top:372px;width:2px;height:12px;background:#111"></div>
<div class="abs" style="left:490px;top:544px;width:240px;height:1px;background:#222"></div>
<div class="abs" style="left:879px;top:453px;width:239px;height:1px;background:#9a9a9a"></div>
<div class="abs" style="left:879px;top:635px;width:239px;height:1px;background:#222"></div>
<div class="abs" style="left:719px;top:411px;width:169px;height:267px;background:#a4c2f4;border-radius:3px"></div>
<div class="abs" style="left:340px;top:513.5px;width:150px;height:62px;border:2.4px solid #111;border-radius:5px;background:#f0e68c"></div>
<div class="abs" style="left:728px;top:420.7px;width:150.75px;height:247px;border:2.4px solid #111;border-radius:5px;background:#f0e68c"></div>
<div class="abs" style="left:1117px;top:421.5px;width:150px;height:62.5px;border:2.4px solid #111;border-radius:5px;background:#f0e68c"></div>
<div class="abs" style="left:1117px;top:605px;width:150px;height:62.5px;border:2.4px solid #111;border-radius:5px;background:#f0e68c"></div>
<div class="abs" style="left:730px;top:423px;width:7px;height:7px;background:#111"></div>
<div class="t c" style="left:415px;top:537.8px;font-size:13.7px;color:#1b1b1b;line-height:16px;height:16px;">: Customers</div>
<div class="t c" style="left:805px;top:445.8px;font-size:13.7px;color:#1b1b1b;line-height:16px;height:16px;">: Geospatial Library</div>
<div class="t c" style="left:1192px;top:445.8px;font-size:13.7px;color:#1b1b1b;line-height:16px;height:16px;">: Certification</div>
<div class="t c" style="left:1192px;top:463.8px;font-size:13.7px;color:#1b1b1b;line-height:16px;height:16px;">Authority</div>
<div class="t c" style="left:1192px;top:628.8px;font-size:13.7px;color:#1b1b1b;line-height:16px;height:16px;">: Collectors</div>
<div class="abs" style="left:881.700px;top:452px;width:228px;height:80px;border:3.500px solid #cbcbcb;background:#fff"></div>
<div class="abs" style="left:993.500px;top:452.500px;width:5.500px;height:5.500px;background:#111"></div>
<div class="abs" style="left:1104.700px;top:489px;width:5.500px;height:5.500px;background:#111"></div>
<div class="t" style="left:886px;top:456.8px;font-size:13.7px;color:#1b1b1b;line-height:16px;height:16px;">Certification Connection</div>
<div class="t" style="left:886px;top:475.8px;font-size:13.7px;color:#1b1b1b;line-height:16px;height:16px;">{:certification requests, :certification</div>
<div class="t" style="left:886px;top:494.8px;font-size:13.7px;color:#1b1b1b;line-height:16px;height:16px;">responses}</div>
<div class="t" style="left:500px;top:549.8px;font-size:13.7px;color:#1b1b1b;line-height:16px;height:16px;">Customer Connection</div>
<div class="t" style="left:500px;top:568.8px;font-size:13.7px;color:#1b1b1b;line-height:16px;height:16px;">{:products, :requests, :status}</div>
<div class="t" style="left:896px;top:588.8px;font-size:13.7px;color:#4a4a4a;line-height:16px;height:16px;">Collector Connection {:collector</div>
<div class="t" style="left:896px;top:607.8px;font-size:13.7px;color:#4a4a4a;line-height:16px;height:16px;">data, :collector tasking}</div>
<svg class="abs" style="left:715px;top:534px;" width="34" height="32" viewBox="0 0 34 32"><rect x="2.300" y="2.900" width="17.500" height="22" fill="url(#fy)" stroke="#b89a2a"/><rect x="3.500" y="4" width="6" height="20" fill="#fbf0b0" opacity=".7"/><rect x="16" y="7.300" width="7.800" height="12.300" fill="#9a7630"/><path d="M18 7.300v12.300M20 7.300v12.300M22 7.300v12.300" stroke="#c9a85a" stroke-width=".6"/><circle cx="26.500" cy="23" r="7.300" fill="#9a9a9a" stroke="#858585"/><circle cx="26.500" cy="23" r="5.500" fill="#3fa04a"/><path d="M22.500 23h8M26.500 19v8" stroke="#fff" stroke-width="2"/></svg>
<!--TOOLBOX-->
<div class="abs" style="left:1308px;top:185px;width:299px;height:640px;background:#bdd5f8"></div>
<div class="abs" style="left:1312px;top:188px;width:292px;height:635.500px;border:1.500px solid #8eaad4;background:#fff"></div>
<div class="abs" style="left:1315px;top:190.500px;width:286px;height:17.500px;background:linear-gradient(#ffdcb0 0,#ffd3a0 40%,#ffc98c 60%,#ffdc86 100%)"></div>
<div class="t" style="left:1316px;top:193px;font-size:12.500px;color:#1b1b1b">Toolbox</div>
<svg class="abs" style="left:1550px;top:195px;" width="48" height="12" viewBox="0 0 48 12"><path d="M0 2h8l-4 4z" fill="#222"/><path d="M20.500 .6h4.500v6h-4.500zM24 .6v6M18.500 6.800h8.500M22.700 7v4" stroke="#222" stroke-width="1.100" fill="none"/><path d="M38 1l8 8M46 1l-8 8" stroke="#222" stroke-width="1.400"/></svg>
<div class="abs" style="left:1315px;top:208px;width:286px;height:157px;background:#f0f0f0"></div>
<div class="abs" style="left:1326px;top:285px;width:44px;height:19px;background:#8f8f8f"></div>
<div class="abs" style="left:1437px;top:259px;width:43px;height:71px;background:#8f8f8f"></div>
<div class="abs" style="left:1547px;top:259px;width:43px;height:19px;background:#8f8f8f"></div>
<div class="abs" style="left:1547px;top:311px;width:43px;height:19px;background:#8f8f8f"></div>
<div class="abs" style="left:1370px;top:294px;width:67px;height:1px;background:#c2c2c2"></div>
<div class="abs" style="left:1480px;top:268px;width:67px;height:1px;background:#c2c2c2"></div>
<div class="abs" style="left:1480px;top:320px;width:67px;height:1px;background:#c2c2c2"></div>
<div class="abs" style="left:1315px;top:365px;width:286px;height:28px;background:#dcebfb"></div>
<div class="abs" style="left:1315px;top:392px;width:286px;height:430px;background:#fff;border-top:1px solid #b9c4d4"></div>
<div class="abs" style="left:1362px;top:372px;width:67px;height:21px;background:#ececec;border:1px solid #bdbdbd"></div>
<div class="abs" style="left:1315px;top:370px;width:48px;height:23.500px;background:#fff;border:1px solid #bdbdbd;border-bottom:none"></div>
<div class="t" style="left:1323px;top:374.2px;font-size:12.5px;color:#1b1b1b;line-height:16px;height:16px;">Insert</div>
<div class="t" style="left:1367px;top:374.7px;font-size:12.5px;color:#1b1b1b;line-height:16px;height:16px;">Properties</div>
<div class="abs" style="left:1318px;top:395px;width:33px;height:33px;background:#b8d4f4"></div>
<svg class="abs" style="left:1318px;top:395px;" width="34" height="34" viewBox="0 0 34 34"><path d="M10 14v6M10 17h14v4M17 12h8v6" stroke="#556" fill="none" stroke-width="1.300"/><rect x="19" y="8" width="9" height="8" rx="1.500" fill="#9ab0d8" stroke="#4a5f88" stroke-width="1.300"/><rect x="4" y="3" width="13" height="12" rx="2.500" fill="#9cc0ec" stroke="#1f4f8f" stroke-width="2"/><rect x="7" y="6" width="7" height="6" fill="#fff" opacity=".55"/><rect x="2" y="19" width="13" height="12" rx="2.500" fill="#9ad88a" stroke="#2a7a2a" stroke-width="2"/><rect x="5" y="22" width="7" height="6" fill="#fff" opacity=".55"/><rect x="18" y="19" width="13" height="12" rx="2.500" fill="#f09a9a" stroke="#b02030" stroke-width="2"/><rect x="21" y="22" width="7" height="6" fill="#fff" opacity=".55"/></svg>
<svg class="abs" style="left:1356px;top:396px;" width="32" height="32" viewBox="0 0 32 32"><circle cx="20" cy="11" r="8.500" fill="#f0e68c" stroke="#8a8550" stroke-width="1.300"/><path d="M3.500 8.500h14v14h-14z" fill="#f0e68c" stroke="#8a8550" stroke-width="1.300"/><path d="M16.500 13l8 8-8 8-8-8z" fill="#f0e68c" stroke="#8a8550" stroke-width="1.300"/></svg>
<svg class="abs" style="left:1392px;top:396px;" width="36" height="32" viewBox="0 0 36 32"><path d="M3 8c0-1.500 1-2.500 2.500-2.500h7l2 2.500h6V4.500l3-2.500 3 2.500V25H5.500C4 25 3 24 3 22.500z" fill="#f7a81a" stroke="#d88a0a" stroke-width=".8"/><path d="M15 8V4l4-2.500h5.500V10z" fill="#ffd24a"/><path d="M3 11h20v14H5.500C4 25 3 24 3 22.500z" fill="#f9b530"/><rect x="6" y="9" width="7" height="2" fill="#fff4d8" opacity=".8"/><rect x="20" y="19" width="11" height="10" rx="3" fill="#6f9cd8" stroke="#3a5a8a" stroke-width=".8"/><rect x="21.5" y="20.500" width="8" height="3" rx="1.500" fill="#dbe8f8"/></svg>
<svg class="abs" style="left:1429px;top:396px;" width="36" height="32" viewBox="0 0 36 32"><path d="M3 8c0-1.500 1-2.500 2.500-2.500h7l2 2.500h6V4.500l3-2.500 3 2.500V25H5.500C4 25 3 24 3 22.500z" fill="#f7a81a" stroke="#d88a0a" stroke-width=".8"/><path d="M15 8V4l4-2.500h5.500V10z" fill="#ffd24a"/><path d="M3 11h20v14H5.500C4 25 3 24 3 22.500z" fill="#f9b530"/><rect x="6" y="9" width="7" height="2" fill="#fff4d8" opacity=".8"/><rect x="13" y="19" width="11" height="10" rx="3" fill="#6f9cd8" stroke="#3a5a8a" stroke-width=".8"/><rect x="14.5" y="20.500" width="8" height="3" rx="1.500" fill="#dbe8f8"/><rect x="23" y="19" width="11" height="10" rx="3" fill="#6f9cd8" stroke="#3a5a8a" stroke-width=".8"/><rect x="24.5" y="20.500" width="8" height="3" rx="1.500" fill="#dbe8f8"/></svg>
<svg class="abs" style="left:1328.2px;top:456px;" width="36" height="32" viewBox="0 0 36 32"><path d="M13.500 11v5M5.500 20v-4h16v4" fill="none" stroke="#b03030" stroke-width="1.200"/><rect x="7.5" y="2.5" width="12" height="8.5" rx="1" fill="url(#yg)" stroke="#d4a017" stroke-width="1"/><rect x="1.5" y="20.5" width="9" height="7" rx="1" fill="url(#rg)" stroke="#c42a2a" stroke-width="1.100"/><rect x="17.5" y="20.5" width="9" height="7" rx="1" fill="url(#rg)" stroke="#c42a2a" stroke-width="1.100"/><circle cx="26" cy="25" r="7" fill="#9a9a9a" stroke="#868686" stroke-width=".6"/><circle cx="26" cy="25" r="5.200" fill="#3fa04a"/><path d="M23 25h6M26 22v6" stroke="#fff" stroke-width="1.700"/></svg>
<div class="t" style="left:1367px;top:464.7px;font-size:12.5px;color:#1b1b1b;line-height:16px;height:16px;">New Child</div>
<svg class="abs" style="left:1328.2px;top:500px;" width="36" height="32" viewBox="0 0 36 32"><path d="M13.500 11v5M5.500 20v-4h16v4" fill="none" stroke="#b03030" stroke-width="1.200"/><rect x="7.5" y="2.5" width="12" height="8.5" rx="1" fill="url(#yg)" stroke="#d4a017" stroke-width="1"/><rect x="1.5" y="20.5" width="9" height="7" rx="1" fill="url(#rg)" stroke="#c42a2a" stroke-width="1.100"/><rect x="17.5" y="20.5" width="9" height="7" rx="1" fill="url(#rg)" stroke="#c42a2a" stroke-width="1.100"/><path d="M29 7l3 3L20 22l-4 1.300 1.300-4z" fill="#f2b43a" stroke="#a8741a" stroke-width=".6"/><path d="M29 7l3 3-2 2-3-3z" fill="#d94a4a"/><path d="M18 25l1.300-4 2.700 2.700z" fill="#111"/></svg>
<div class="t" style="left:1367px;top:508.7px;font-size:12.5px;color:#1b1b1b;line-height:16px;height:16px;">Children</div>
<svg class="abs" style="left:1328px;top:544px;" width="36" height="32" viewBox="0 0 36 32"><path d="M7.500 11v5.500h10v5" fill="none" stroke="#b03030" stroke-width="1.300"/><rect x="1.5" y="2.5" width="11" height="8.5" rx="1" fill="url(#yg)" stroke="#d4a017" stroke-width="1"/><rect x="11.5" y="18.5" width="10.5" height="10" rx="1" fill="url(#yg)" stroke="#d4a017" stroke-width="1"/><circle cx="26.5" cy="25.5" r="7" fill="#9a9a9a" stroke="#868686" stroke-width=".6"/><circle cx="26.5" cy="25.5" r="5.200" fill="#3fa04a"/><path d="M23.5 25.5h6M26.5 22.5v6" stroke="#fff" stroke-width="1.700"/></svg>
<div class="t" style="left:1367px;top:552.7px;font-size:12.5px;color:#1b1b1b;line-height:16px;height:16px;">New Connection</div>
<svg class="abs" style="left:1328px;top:588px;" width="36" height="34" viewBox="0 0 36 34"><path d="M7.500 11v5.500h16v5" fill="none" stroke="#b03030" stroke-width="1.300"/><rect x="1.5" y="2.5" width="11" height="8.5" rx="1" fill="url(#yg)" stroke="#d4a017" stroke-width="1"/><rect x="17.5" y="20" width="12" height="9.5" rx="1" fill="url(#yg)" stroke="#d4a017" stroke-width="1"/><path d="M30 1.5l3 3L20 14l-4 1.300 1.300-4z" fill="#f2b43a" stroke="#a8741a" stroke-width=".6"/><path d="M30 1.5l3 3-2 2-3-3z" fill="#d94a4a"/><path d="M18 17l1.300-4 2.700 2.700z" fill="#111"/></svg>
<div class="t" style="left:1367px;top:596.7px;font-size:12.5px;color:#1b1b1b;line-height:16px;height:16px;">Connections</div>
<svg class="abs" style="left:1330px;top:632px;" width="34" height="32" viewBox="0 0 34 32"><rect x="2.5" y="2.5" width="16.500" height="20" fill="url(#fy)" stroke="#b89a2a"/><rect x="3.5" y="3.5" width="5" height="18" fill="#fbf0b0" opacity=".7"/><rect x="16" y="7" width="6.500" height="13" fill="#9a7630"/><path d="M18 7v12M20 7v12" stroke="#c9a85a" stroke-width=".6"/><circle cx="24.5" cy="21" r="7" fill="#9a9a9a" stroke="#868686" stroke-width=".6"/><circle cx="24.5" cy="21" r="5.200" fill="#3fa04a"/><path d="M21.5 21h6M24.5 18v6" stroke="#fff" stroke-width="1.700"/></svg>
<div class="t" style="left:1367px;top:640.7px;font-size:12.5px;color:#1b1b1b;line-height:16px;height:16px;">New Full Port</div>
<svg class="abs" style="left:1332px;top:680px;" width="30" height="28" viewBox="0 0 30 28"><rect x="3.5" y="3.5" width="16.500" height="20" fill="url(#fy)" stroke="#b89a2a"/><rect x="4.5" y="4.5" width="5" height="18" fill="#fbf0b0" opacity=".7"/><rect x="17" y="8" width="6.500" height="13" fill="#9a7630"/><path d="M19 8v12M21 8v12" stroke="#c9a85a" stroke-width=".6"/></svg>
<div class="t" style="left:1367px;top:684.7px;font-size:12.5px;color:#1b1b1b;line-height:16px;height:16px;">Full Port</div>
<svg class="abs" style="left:1330px;top:720px;" width="34" height="32" viewBox="0 0 34 32"><rect x="2.5" y="2.5" width="16.500" height="20" fill="url(#fy)" stroke="#b89a2a"/><rect x="3.5" y="3.5" width="5" height="18" fill="#fbf0b0" opacity=".7"/><rect x="16.5" y="8.5" width="6" height="11" fill="#f7e58a" stroke="#a88a2a" stroke-width=".9"/><circle cx="24.5" cy="21" r="7" fill="#9a9a9a" stroke="#868686" stroke-width=".6"/><circle cx="24.5" cy="21" r="5.200" fill="#3fa04a"/><path d="M21.5 21h6M24.5 18v6" stroke="#fff" stroke-width="1.700"/></svg>
<div class="t" style="left:1367px;top:728.7px;font-size:12.5px;color:#1b1b1b;line-height:16px;height:16px;">New Proxy Port</div>
<svg class="abs" style="left:1332px;top:768px;" width="30" height="28" viewBox="0 0 30 28"><rect x="3.5" y="3.5" width="16.500" height="20" fill="url(#fy)" stroke="#b89a2a"/><rect x="4.5" y="4.5" width="5" height="18" fill="#fbf0b0" opacity=".7"/><rect x="17.5" y="9.5" width="6" height="11" fill="#f7e58a" stroke="#a88a2a" stroke-width=".9"/></svg>
<div class="t" style="left:1367px;top:772.7px;font-size:12.5px;color:#1b1b1b;line-height:16px;height:16px;">Proxy Port</div>
<div class="abs" style="left:1308.700px;top:619.300px;width:154.300px;height:55.300px;border:8.500px solid #bf0000;border-radius:13px"></div>
<svg class="abs" style="left:740px;top:530px;" width="580" height="130" viewBox="0 0 580 130"><path d="M569 116L30 22.300" stroke="#b80a10" stroke-width="2.800" stroke-dasharray="2.800 3.200" fill="none"/><path d="M16.300 19.500L36.900 13.100 30 22.800 33.500 32.500z" fill="#c80a0a"/></svg>
<!--BOTTOM-->
<style>.btab{position:absolute;border:1px solid #bdbdbd;display:flex;align-items:center;justify-content:center;font-size:12.400px;color:#1b1b1b;white-space:nowrap}.btab svg{margin-right:3px;flex:none}.btab span{position:relative;top:1px}</style>
<div class="abs" style="left:283px;top:825px;width:1323.500px;height:45px;background:#dfeaf8"></div>
<div class="btab" style="left:285px;top:826px;width:159px;height:22px;background:linear-gradient(#e6f0fc,#c9dcf6);"><svg width="16" height="16" viewBox="0 0 16 16"><rect x="2.500" y="4.500" width="11" height="10" fill="#f4f4f4" stroke="#8a8a8a"/><rect x="2.500" y="4.500" width="11" height="2.500" fill="#c8d4e8"/><path d="M8 4l5-3 3 2-5 3z" fill="#5aa02a"/><path d="M11 1l4 1-1 3" fill="#e8c030"/></svg><span>Properties</span></div>
<div class="btab" style="left:443px;top:826px;width:138px;height:22px;background:linear-gradient(#f4f4f4,#e7e7e7);"><svg width="16" height="16" viewBox="0 0 16 16"><rect x="1" y="1" width="5" height="4" fill="#f7d24a" stroke="#b8901a" stroke-width=".7"/><rect x="10" y="1" width="5" height="4" fill="#f7d24a" stroke="#b8901a" stroke-width=".7"/><rect x="5" y="6" width="5" height="4" fill="#f7d24a" stroke="#b8901a" stroke-width=".7"/><rect x="1" y="11" width="5" height="4" fill="#f7d24a" stroke="#b8901a" stroke-width=".7"/><rect x="10" y="11" width="5" height="4" fill="#f7d24a" stroke="#b8901a" stroke-width=".7"/><path d="M5 4l2 2M11 4l-2 2M5 12l2-2M11 12l-2-2" stroke="#5a78b8" stroke-width=".9"/></svg><span>Spider</span></div>
<div class="btab" style="left:580px;top:826px;width:158px;height:22px;background:linear-gradient(#f4f4f4,#e7e7e7);"><svg width="16" height="16" viewBox="0 0 16 16"><rect x="5.5" y="1" width="5" height="4" fill="#f7d24a" stroke="#b8901a" stroke-width=".7"/><rect x="1" y="10.5" width="5" height="4" fill="#f7d24a" stroke="#b8901a" stroke-width=".7"/><rect x="10" y="10.5" width="5" height="4" fill="#f7d24a" stroke="#b8901a" stroke-width=".7"/><path d="M8 5v3M3.500 10.500v-2.500h9v2.500" stroke="#5a78b8" fill="none" stroke-width=".9"/></svg><span>Hierarchy</span></div>
<div class="btab" style="left:737px;top:826px;width:127px;height:22px;background:linear-gradient(#f4f4f4,#e7e7e7);"><svg width="16" height="16" viewBox="0 0 16 16"><rect x="2.5" y="1" width="11" height="4" fill="#f7d24a" stroke="#b8901a" stroke-width=".7"/><rect x="1" y="10.5" width="5" height="4" fill="#f7d24a" stroke="#b8901a" stroke-width=".7"/><rect x="10" y="10.5" width="5" height="4" fill="#f7d24a" stroke="#b8901a" stroke-width=".7"/><path d="M8 5v3M3.500 10.500v-2.500h9v2.500" stroke="#5a78b8" fill="none" stroke-width=".9"/></svg><span>BDD</span></div>
<div class="btab" style="left:863px;top:826px;width:190px;height:22px;background:linear-gradient(#f4f4f4,#e7e7e7);"><svg width="16" height="16" viewBox="0 0 16 16"><rect x="5.5" y="1" width="5" height="4" fill="#f7d24a" stroke="#b8901a" stroke-width=".7"/><rect x="1" y="10.5" width="5" height="4" fill="#f7d24a" stroke="#b8901a" stroke-width=".7"/><rect x="10" y="10.5" width="5" height="4" fill="#f7d24a" stroke="#b8901a" stroke-width=".7"/><path d="M8 5v3M3.500 10.500v-2.500h9v2.500" stroke="#333" fill="none" stroke-width=".9"/><path d="M2 9l6-7 6 7" stroke="#555" fill="none" stroke-width=".9"/></svg><span>Constraint BDD</span></div>
<div class="btab" style="left:1052px;top:826px;width:167px;height:22px;background:linear-gradient(#f4f4f4,#e7e7e7);"><svg width="16" height="16" viewBox="0 0 16 16"><rect x="1" y="1" width="5" height="4" fill="#f7d24a" stroke="#b8901a" stroke-width=".7"/><rect x="10" y="6" width="5" height="4" fill="#f7d24a" stroke="#b8901a" stroke-width=".7"/><rect x="5" y="11" width="5" height="4" fill="#f7d24a" stroke="#b8901a" stroke-width=".7"/><path d="M6 3h6.500v3M12.500 10v3h-2.500" stroke="#5a78b8" fill="none" stroke-width=".9"/><path d="M0 10v6M0 10.500h2.500v2.500h-2.500" stroke="#c02020" fill="none" stroke-width="1.100"/></svg><span>Physical N2</span></div>
<div class="btab" style="left:1218px;top:826px;width:179px;height:22px;background:linear-gradient(#f4f4f4,#e7e7e7);"><svg width="16" height="16" viewBox="0 0 16 16"><rect x="1.500" y="1.500" width="13" height="13" fill="#fdf4c8" stroke="#555" stroke-width=".9"/><rect x="3" y="3" width="4" height="4" fill="#f7d24a" stroke="#b8901a" stroke-width=".7"/><rect x="9" y="3" width="4" height="4" fill="#f7d24a" stroke="#b8901a" stroke-width=".7"/><rect x="6" y="9" width="4" height="4" fill="#f7d24a" stroke="#b8901a" stroke-width=".7"/></svg><span>Physical Block</span></div>
<div class="btab" style="left:285px;top:847px;width:150px;height:21px;background:linear-gradient(#f4f4f4,#e7e7e7);"><svg width="16" height="16" viewBox="0 0 16 16"><rect x="1" y="1" width="5" height="4" fill="#f7d24a" stroke="#b8901a" stroke-width=".7"/><rect x="9" y="1" width="6" height="4" fill="#f7d24a" stroke="#b8901a" stroke-width=".7"/><rect x="1" y="11" width="5" height="4" fill="#f7d24a" stroke="#b8901a" stroke-width=".7"/><rect x="9" y="11" width="6" height="4" fill="#f7d24a" stroke="#b8901a" stroke-width=".7"/><path d="M6 3h3M8 5v6M11 5v6M6 13h3" stroke="#333" stroke-width=".9" fill="none"/></svg><span>Class</span></div>
<div class="btab" style="left:434px;top:847px;width:207px;height:21px;background:linear-gradient(#f4f4f4,#e7e7e7);"><svg width="16" height="16" viewBox="0 0 16 16"><ellipse cx="8" cy="8" rx="7" ry="6.500" fill="none" stroke="#5a78b8" stroke-width="1"/><rect x="1" y="1" width="6" height="4" fill="#f7d24a" stroke="#b8901a" stroke-width=".7"/><rect x="10" y="4" width="5" height="4" fill="#f7d24a" stroke="#b8901a" stroke-width=".7"/><rect x="3" y="11" width="6" height="4" fill="#f7d24a" stroke="#b8901a" stroke-width=".7"/></svg><span>State Transition</span></div>
<div class="btab" style="left:640px;top:847px;width:159px;height:21px;background:linear-gradient(#f4f4f4,#e7e7e7);"><svg width="16" height="16" viewBox="0 0 16 16"><path d="M0 8h16M8 1v14" stroke="#d04a8a" stroke-width=".9"/><rect x="5.5" y="1" width="5" height="4" fill="#f7d24a" stroke="#b8901a" stroke-width=".7"/><rect x="5.5" y="11" width="5" height="4" fill="#f7d24a" stroke="#b8901a" stroke-width=".7"/><circle cx="3" cy="8" r="2" fill="#f7d24a" stroke="#b8901a" stroke-width=".7"/><circle cx="13" cy="8" r="2" fill="#f7d24a" stroke="#b8901a" stroke-width=".7"/></svg><span>EFFBD</span></div>
<div class="btab" style="left:798px;top:847px;width:163px;height:21px;background:linear-gradient(#f4f4f4,#e7e7e7);"><svg width="16" height="16" viewBox="0 0 16 16"><rect x="5" y="1" width="6" height="4" fill="#f7d24a" stroke="#b8901a" stroke-width=".7"/><rect x="5" y="10.5" width="6" height="4" fill="#f7d24a" stroke="#b8901a" stroke-width=".7"/><path d="M8 5v5.500" stroke="#5a78b8" stroke-width=".9"/></svg><span>Activity</span></div>
<div class="btab" style="left:960px;top:847px;width:177px;height:21px;background:linear-gradient(#f4f4f4,#e7e7e7);"><svg width="16" height="16" viewBox="0 0 16 16"><rect x="0.5" y="1" width="4" height="3" fill="#f7d24a" stroke="#b8901a" stroke-width=".7"/><rect x="6" y="1" width="4" height="3" fill="#f7d24a" stroke="#b8901a" stroke-width=".7"/><rect x="11.5" y="1" width="4" height="3" fill="#f7d24a" stroke="#b8901a" stroke-width=".7"/><path d="M2.500 4v11M8 4v11M13.500 4v11" stroke="#5a78b8" stroke-width=".8" stroke-dasharray="2 1"/><path d="M2.500 8h5.500M8 11h5.500" stroke="#444" stroke-width=".9"/></svg><span>Sequence</span></div>
<div class="btab" style="left:1136px;top:847px;width:139px;height:21px;background:linear-gradient(#f4f4f4,#e7e7e7);"><svg width="16" height="16" viewBox="0 0 16 16"><rect x="1" y="1" width="5" height="4" fill="#f7d24a" stroke="#b8901a" stroke-width=".7"/><rect x="10" y="6" width="5" height="4" fill="#f7d24a" stroke="#b8901a" stroke-width=".7"/><rect x="5" y="11" width="5" height="4" fill="#f7d24a" stroke="#b8901a" stroke-width=".7"/><path d="M6 3h6.500v3M12.500 10v3h-2.500M1.500 5v8.500h3.500" stroke="#5a78b8" fill="none" stroke-width=".9"/></svg><span>N2</span></div>
<div class="btab" style="left:1274px;top:847px;width:154px;height:21px;background:linear-gradient(#f4f4f4,#e7e7e7);"><svg width="16" height="16" viewBox="0 0 16 16"><rect x="1" y="1" width="5" height="4" fill="#f7d24a" stroke="#b8901a" stroke-width=".7"/><rect x="9" y="9" width="6" height="5" fill="#f7d24a" stroke="#b8901a" stroke-width=".7"/><path d="M6 3h6v6M3 5v7h6M12 14v2M5 0v1" stroke="#5a78b8" fill="none" stroke-width=".9"/></svg><span>IDEF0</span></div>
<div class="btab" style="left:1427px;top:847px;width:178px;height:21px;background:linear-gradient(#f4f4f4,#e7e7e7);"><svg width="16" height="16" viewBox="0 0 16 16"><rect x="5" y="2" width="7" height="5" fill="#f7d24a" stroke="#b8901a" stroke-width=".7"/><path d="M1 4.500h4M12 4.500h4M8.500 0v2M8.500 7v3" stroke="#5a78b8" stroke-width=".9"/><text x="0" y="16" font-size="7.500" font-weight="bold" font-family="Liberation Sans, sans-serif" fill="#c02020">A0</text></svg><span>IDEF0 A-0</span></div>
<div class="btab" style="left:1396px;top:826px;width:210px;height:23px;background:#fff;border-color:#fff;border-top-color:#fff;padding-top:3px;"><svg width="16" height="16" viewBox="0 0 16 16"><path d="M11 3H5a3 3 0 0 0 0 10h6" fill="none" stroke="#555" stroke-width="1.100"/><rect x="1" y="5.5" width="6" height="5" fill="#f7d24a" stroke="#b8901a" stroke-width=".7"/><rect x="10" y="1" width="5" height="4" fill="#f7d24a" stroke="#b8901a" stroke-width=".7"/><rect x="10" y="11" width="5" height="4" fill="#f7d24a" stroke="#b8901a" stroke-width=".7"/></svg><span>Flow Internal Block</span></div>
<!--END-->
</div>
</body></html>
